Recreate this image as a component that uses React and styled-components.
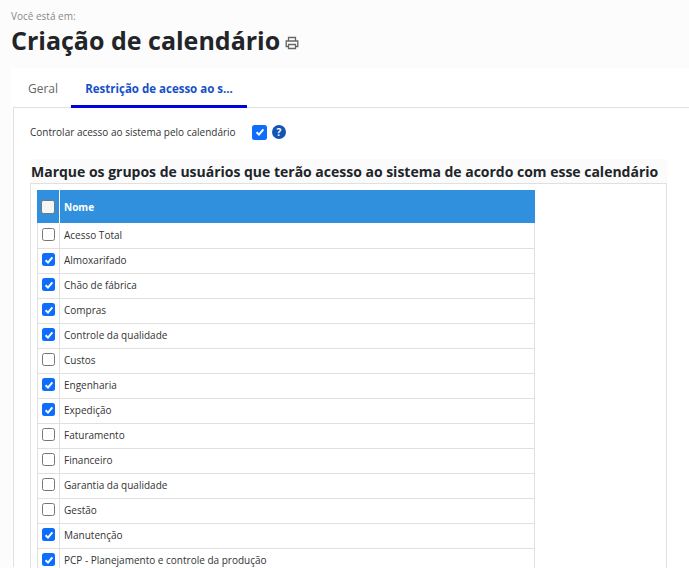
import React from "react";
import styled, { createGlobalStyle } from "styled-components";

const Global = createGlobalStyle`
  html, body { margin: 0; padding: 0; background: #fcfcfc; overflow: hidden; }
  body { font-family: "Open Sans", "Liberation Sans", sans-serif; }
`;
const Page = styled.div`width: 689px; height: 568px; overflow: hidden;`;
const Header = styled.header`height: 68px; padding: 9px 0 0 11px; box-sizing: border-box;`;
const Crumb = styled.div`font-size: 10px; line-height: 14px; color: #8a8a8a;`;
const TitleRow = styled.div`display: flex; align-items: center; gap: 5px; margin-top: 1px;`;
const Title = styled.h1`margin: 0; font-size: 25px; line-height: 32px; font-weight: 700; color: #212529;`;
const Panel = styled.main`margin-left: 11px; background: #fff; height: 500px;`;
const Tabs = styled.nav`display: flex; height: 39px; padding-left: 2px; box-sizing: border-box; align-items: stretch;`;
const Tab = styled.div`
  display: flex; align-items: center; justify-content: center; box-sizing: border-box;
  width: ${p => p.$w}px; padding-top: 4px; font-size: ${p => (p.$active ? 11.5 : 12)}px;
  padding-left: ${p => (p.$active ? 0 : 2)}px;
  color: ${p => (p.$active ? "#1650c8" : "#666")};
  font-weight: ${p => (p.$active ? 700 : 400)};
  border-bottom: 3px solid ${p => (p.$active ? "#0000e0" : "transparent")};
  margin-bottom: -1px; position: relative;
`;
const Content = styled.section`
  margin-left: 2px; border-left: 1px solid #e0e0e0; border-top: 1px solid #e0e0e0;
  padding: 13px 22px 0 16px; height: 460px; box-sizing: border-box;
`;
const ControlRow = styled.div`display: flex; align-items: center; height: 22px; font-size: 10px; color: #333;`;
const ControlLabel = styled.span`width: 222px;`;
const HelpIcon = styled.svg`margin-left: 5px;`;
const Legend = styled.h2`
  margin: 16px 0 0; padding-left: 1px; background: #fbfbfb; height: 24px; line-height: 25px; font-size: 14px;
  font-weight: 700; color: #212529; white-space: nowrap; letter-spacing: -0.01px;
`;
const Box = styled.div`border: 1px solid #e0e0e0; border-bottom: 0; padding: 6px 0 0 6px; height: 400px; box-sizing: border-box;`;
const Table = styled.table`border-collapse: separate; border-spacing: 0; table-layout: fixed; width: 498px; font-size: 10px; color: #333;`;
const HeadCell = styled.th`
  background: #3090de; height: 33px; box-sizing: border-box; padding: 0 0 0 ${p => (p.$first ? 0 : 4)}px; color: #fff; text-align: left; font-size: 10px;
  font-weight: 700; border-right: ${p => (p.$first ? "1px solid #fff" : "0")};
  width: ${p => (p.$first ? "23px" : "auto")};
`;
const Cell = styled.td`
  box-sizing: border-box; height: ${p => (p.$top ? 26 : 25)}px;
  padding: 0 0 ${p => (p.$top ? 2 : 3)}px ${p => (p.$first ? 0 : 4)}px;
  border-bottom: 1px solid #e0e0e0;
  border-right: 1px solid #e0e0e0;
  border-left: ${p => (p.$first ? "1px solid #e0e0e0" : "0")};
`;
const BoxCheck = styled.span`
  display: flex; align-items: center; justify-content: center; box-sizing: border-box;
  width: ${p => p.$size || 13}px; height: ${p => p.$size || 13}px; border-radius: 2.5px;
  margin: ${p => (p.$inline ? "0" : "0 auto")};
  background: ${p => (p.$checked ? "#0d6efd" : p.$head ? "#f5f5f5" : "#fff")};
  border: ${p => (p.$checked ? "0" : "1px solid #767676")};
`;

const Check = ({ checked, head, inline, size }) => (
  <BoxCheck $checked={checked} $head={head} $inline={inline} $size={size}>
    {checked && (
      <svg width="10" height="10" viewBox="0 0 10 10">
        <path d="M1.6 5.2 4 7.6 8.4 2.4" fill="none" stroke="#fff" strokeWidth="2" />
      </svg>
    )}
  </BoxCheck>
);

const rows = [
  ["Acesso Total", false],
  ["Almoxarifado", true],
  ["Chão de fábrica", true],
  ["Compras", true],
  ["Controle da qualidade", true],
  ["Custos", false],
  ["Engenharia", true],
  ["Expedição", true],
  ["Faturamento", false],
  ["Financeiro", false],
  ["Garantia da qualidade", false],
  ["Gestão", false],
  ["Manutenção", true],
  ["PCP - Planejamento e controle da produção", true],
];

export default function App() {
  return (
    <Page>
      <Global />
      <Header>
        <Crumb>Você está em:</Crumb>
        <TitleRow>
          <Title>Criação de calendário</Title>
          <svg width="14" height="14" viewBox="0 0 14 14" fill="none" stroke="#666" strokeWidth="1.3" style={{ marginTop: 6 }}>
            <path d="M3.5 5V1.5h7V5M3.5 10.5H1.2V5h11.6v5.5h-2.3" />
            <path d="M3.5 8.5h7v4h-7z" />
          </svg>
        </TitleRow>
      </Header>
      <Panel>
        <Tabs>
          <Tab $w={58}>Geral</Tab>
          <Tab $w={176} $active>Restrição de acesso ao s...</Tab>
        </Tabs>
        <Content>
          <ControlRow>
            <ControlLabel>Controlar acesso ao sistema pelo calendário</ControlLabel>
            <Check checked inline size={15} />
            <HelpIcon width="14" height="14" viewBox="0 0 14 14">
              <circle cx="7" cy="7" r="7" fill="#1155b5" />
              <text x="7" y="10.5" textAnchor="middle" fontSize="10" fontWeight="700" fill="#fff" fontFamily="Open Sans">?</text>
            </HelpIcon>
          </ControlRow>
          <Legend>Marque os grupos de usuários que terão acesso ao sistema de acordo com esse calendário</Legend>
          <Box>
            <Table>
              <thead>
                <tr>
                  <HeadCell $first><Check head size={14} /></HeadCell>
                  <HeadCell>Nome</HeadCell>
                </tr>
              </thead>
              <tbody>
                {rows.map(([name, checked], i) => (
                  <tr key={name}>
                    <Cell $first $top={i === 0}><Check checked={checked} /></Cell>
                    <Cell $top={i === 0}>{name}</Cell>
                  </tr>
                ))}
              </tbody>
            </Table>
          </Box>
        </Content>
      </Panel>
    </Page>
  );
}
